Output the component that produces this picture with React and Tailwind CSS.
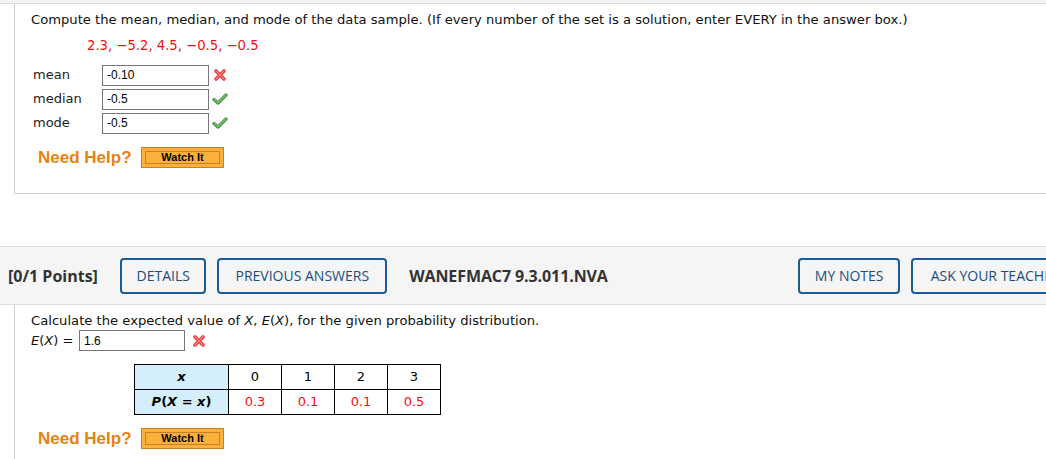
const XMark = () => (
  <svg width="14" height="14" viewBox="0 0 14 14" className="shrink-0">
    <path d="M3 3 L11 11 M11 3 L3 11" stroke="#ec4b4b" strokeWidth="3.8" strokeLinecap="round" />
    <path d="M3 3 L11 11 M11 3 L3 11" stroke="#f58a8a" strokeWidth="1" strokeLinecap="round" />
  </svg>
);

const Check = () => (
  <svg width="16" height="14" viewBox="0 0 16 14" className="shrink-0">
    <path d="M2 7.5 L6 11 L14 3" fill="none" stroke="#4f9d4f" strokeWidth="3.4" strokeLinecap="round" strokeLinejoin="round" />
    <path d="M2.5 7.5 L6 10.3 L13.5 3.3" fill="none" stroke="#8fd08f" strokeWidth="1" strokeLinecap="round" />
  </svg>
);

const Input = ({ value, w = "w-[107px]" }) => (
  <div
    className={`${w} h-[21px] border border-[#777] flex items-center px-[4px] text-[12px] text-black`}
    style={{ fontFamily: '"Liberation Sans", Arial, sans-serif' }}
  >
    {value}
  </div>
);

const NeedHelp = () => (
  <div className="flex items-center">
    <span
      className="text-[17px] font-bold text-[#e8820f] ml-[23px] w-[103px]"
      style={{ fontFamily: '"Liberation Sans", Arial, sans-serif' }}
    >
      Need Help?
    </span>
    <div className="w-[83px] h-[21px] border border-[#c8812a] bg-[#fbb03b] p-[3px]">
      <div
        className="h-full border border-[#c8812a] flex items-center justify-center text-[11px] font-bold text-black leading-none"
        style={{ fontFamily: '"Liberation Sans", Arial, sans-serif' }}
      >
        Watch It
      </div>
    </div>
  </div>
);

const Row = ({ label, value, ok }) => (
  <div className="flex items-center h-[24px]">
    <span className="w-[71px] pl-[2px] text-[13px] text-[#222]">{label}</span>
    <Input value={value} />
    <span className="ml-[3px] w-[16px] flex justify-center">{ok ? <Check /> : <XMark />}</span>
  </div>
);

const OutlineBtn = ({ children, className = "" }) => (
  <div
    className={`h-[36px] border-2 border-[#1a5d95] rounded-[4px] flex items-center justify-center whitespace-nowrap text-[14px] text-[#1b4d7d] ${className}`}
  >
    {children}
  </div>
);

export default function App() {
  const verdana = { fontFamily: '"DejaVu Sans", Verdana, sans-serif' };
  const open = { fontFamily: '"Open Sans", sans-serif' };
  return (
    <div className="w-[1046px] h-[459px] overflow-hidden bg-white">
      <div className="w-[1080px]">
        <div className="h-[4px] bg-[#f4f4f4] border-b border-[#dcdcdc]" />
        <div className="ml-[14px] border-l border-b border-[#cfcfcf] h-[190px] pl-[16px]" style={verdana}>
          <p className="pt-[8px] text-[13.15px] leading-[16px] text-[#111]">
            Compute the mean, median, and mode of the data sample. (If every number of the set is a solution, enter EVERY in the answer box.)
          </p>
          <p className="mt-[10px] ml-[56px] text-[13.2px] leading-[16px] text-[#f01010]">
            2.3, −5.2, 4.5, −0.5, −0.5
          </p>
          <div className="mt-[9px]">
            <Row label="mean" value="-0.10" />
            <Row label="median" value="-0.5" ok />
            <Row label="mode" value="-0.5" ok />
          </div>
          <div className="mt-[10px] -ml-[16px]">
            <NeedHelp />
          </div>
        </div>

        <div className="mt-[52px] h-[59px] bg-[#f5f5f5] border-y border-[#dedede] flex items-center" style={open}>
          <span className="ml-[8px] w-[113px] text-[16px] font-bold text-[#333]">[0/1 Points]</span>
          <OutlineBtn className="w-[87px]">DETAILS</OutlineBtn>
          <OutlineBtn className="w-[171px] ml-[11px]">PREVIOUS ANSWERS</OutlineBtn>
          <span className="ml-[22px] w-[392px] text-[16px] font-bold text-[#333] tracking-[-0.1px]">WANEFMAC7 9.3.011.NVA</span>
          <OutlineBtn className="w-[103px]">MY NOTES</OutlineBtn>
          <OutlineBtn className="w-[170px] ml-[11px]">ASK YOUR TEACHER</OutlineBtn>
        </div>

        <div className="ml-[14px] border-l border-[#cfcfcf] h-[160px] pl-[16px]" style={verdana}>
          <p className="pt-[8px] text-[13.15px] leading-[16px] text-[#111]">
            Calculate the expected value of <i>X</i>, <i>E</i>(<i>X</i>), for the given probability distribution.
          </p>
          <div className="flex items-center mt-[1px] h-[21px]">
            <span className="text-[13px] text-[#111] w-[48px]">
              <i>E</i>(<i>X</i>) =
            </span>
            <Input value="1.6" w="w-[106px]" />
            <span className="ml-[7px]"><XMark /></span>
          </div>
          <table className="mt-[13px] ml-[103px] border-collapse text-[13px]">
            <tbody>
              <tr className="h-[25px]">
                <td className="w-[94px] p-0 border border-black bg-[#d4eefb] text-center font-bold italic">x</td>
                <td className="w-[53px] p-0 border border-black text-center">0</td>
                <td className="w-[53px] p-0 border border-black text-center">1</td>
                <td className="w-[53px] p-0 border border-black text-center">2</td>
                <td className="w-[53px] p-0 border border-black text-center">3</td>
              </tr>
              <tr className="h-[25px]">
                <td className="p-0 border border-black bg-[#d4eefb] text-center font-bold">
                  <i>P</i>(<i>X</i> = <i>x</i>)
                </td>
                <td className="p-0 border border-black text-center text-[#f01010]">0.3</td>
                <td className="p-0 border border-black text-center text-[#f01010]">0.1</td>
                <td className="p-0 border border-black text-center text-[#f01010]">0.1</td>
                <td className="p-0 border border-black text-center text-[#f01010]">0.5</td>
              </tr>
            </tbody>
          </table>
          <div className="mt-[11px] -ml-[16px]">
            <NeedHelp />
          </div>
        </div>
      </div>
    </div>
  );
}
